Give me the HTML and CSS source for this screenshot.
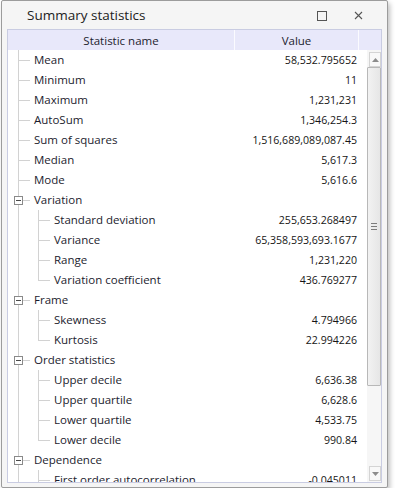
FILE: index.html
```html
<!DOCTYPE html>
<html lang="en">
<head>
  <meta charset="UTF-8">
  <meta name="viewport" content="width=device-width, initial-scale=1.0">
  <title>Summary statistics</title>
  <link rel="stylesheet" href="styles.css">
</head>
<body>
  <div class="window">
    <div class="titlebar">
      <span class="title">Summary statistics</span>
      <span class="btn-max"></span>
      <svg class="btn-close" width="9" height="9" viewBox="0 0 9 9">
        <path d="M1 1 L8 8 M8 1 L1 8" stroke="#555" stroke-width="1.1" fill="none"/>
      </svg>
    </div>

    <div class="grid">
      <div class="grid-head">
        <div class="head-name">Statistic name</div>
        <div class="head-value">Value</div>
        <div class="head-rest"></div>
      </div>

      <div class="grid-body">
        <div class="rows">
          <div class="row"><div class="name"><span class="tl tl-t"></span>Mean</div><div class="value">58,532.795652</div></div>
          <div class="row"><div class="name"><span class="tl tl-t"></span>Minimum</div><div class="value">11</div></div>
          <div class="row"><div class="name"><span class="tl tl-t"></span>Maximum</div><div class="value">1,231,231</div></div>
          <div class="row"><div class="name"><span class="tl tl-t"></span>AutoSum</div><div class="value">1,346,254.3</div></div>
          <div class="row"><div class="name"><span class="tl tl-t"></span>Sum of squares</div><div class="value">1,516,689,089,087.45</div></div>
          <div class="row"><div class="name"><span class="tl tl-t"></span>Median</div><div class="value">5,617.3</div></div>
          <div class="row"><div class="name"><span class="tl tl-t"></span>Mode</div><div class="value">5,616.6</div></div>

          <div class="row"><div class="name"><span class="tl tl-g"><span class="toggle"></span></span>Variation</div><div class="value"></div></div>
          <div class="row"><div class="name"><span class="tl tl-i"></span><span class="tl tl-t"></span>Standard deviation</div><div class="value">255,653.268497</div></div>
          <div class="row"><div class="name"><span class="tl tl-i"></span><span class="tl tl-t"></span>Variance</div><div class="value">65,358,593,693.1677</div></div>
          <div class="row"><div class="name"><span class="tl tl-i"></span><span class="tl tl-t"></span>Range</div><div class="value">1,231,220</div></div>
          <div class="row"><div class="name"><span class="tl tl-i"></span><span class="tl tl-l"></span>Variation coefficient</div><div class="value">436.769277</div></div>

          <div class="row"><div class="name"><span class="tl tl-g"><span class="toggle"></span></span>Frame</div><div class="value"></div></div>
          <div class="row"><div class="name"><span class="tl tl-i"></span><span class="tl tl-t"></span>Skewness</div><div class="value">4.794966</div></div>
          <div class="row"><div class="name"><span class="tl tl-i"></span><span class="tl tl-l"></span>Kurtosis</div><div class="value">22.994226</div></div>

          <div class="row"><div class="name"><span class="tl tl-g"><span class="toggle"></span></span>Order statistics</div><div class="value"></div></div>
          <div class="row"><div class="name"><span class="tl tl-i"></span><span class="tl tl-t"></span>Upper decile</div><div class="value">6,636.38</div></div>
          <div class="row"><div class="name"><span class="tl tl-i"></span><span class="tl tl-t"></span>Upper quartile</div><div class="value">6,628.6</div></div>
          <div class="row"><div class="name"><span class="tl tl-i"></span><span class="tl tl-t"></span>Lower quartile</div><div class="value">4,533.75</div></div>
          <div class="row"><div class="name"><span class="tl tl-i"></span><span class="tl tl-l"></span>Lower decile</div><div class="value">990.84</div></div>

          <div class="row"><div class="name"><span class="tl tl-g"><span class="toggle"></span></span>Dependence</div><div class="value"></div></div>
          <div class="row"><div class="name"><span class="tl tl-i"></span><span class="tl tl-t"></span>First order autocorrelation</div><div class="value">-0.045011</div></div>
        </div>

        <div class="scrollbar">
          <div class="sb-btn">
            <svg width="7" height="4" viewBox="0 0 7 4"><path d="M0 4 L3.5 0 L7 4 Z" fill="#8c8c8c"/></svg>
          </div>
          <div class="sb-thumb">
            <span class="grip"></span>
          </div>
          <div class="sb-track"></div>
          <div class="sb-btn">
            <svg width="7" height="4" viewBox="0 0 7 4"><path d="M0 0 L7 0 L3.5 4 Z" fill="#8c8c8c"/></svg>
          </div>
        </div>
      </div>
    </div>
  </div>
</body>
</html>
```

FILE: styles.css
```css
* {
  margin: 0;
  padding: 0;
  box-sizing: border-box;
}

body {
  font-family: "Open Sans", "Noto Sans", sans-serif;
  background-color: #ffffff;
  color: #1c1c2e;
}

.window {
  width: 387px;
  height: 488px;
  margin-left: 1px;
  background-color: #f5f5f5;
  border: 1px solid #9c9c9c;
  border-radius: 2px;
  box-shadow: 2px 3px 5px rgba(0, 0, 0, 0.25);
  padding: 0 5px 4px 5px;
  display: flex;
  flex-direction: column;
}

.titlebar {
  height: 28px;
  display: flex;
  align-items: center;
  padding-left: 20px;
}

.title {
  font-size: 13.5px;
  color: #222;
  flex: 1;
}

.btn-max {
  width: 10px;
  height: 10px;
  border: 1px solid #555;
  margin-right: 27px;
  margin-top: 1px;
}

.btn-close {
  margin-right: 19px;
  margin-top: 1px;
}

.grid {
  flex: 1;
  border: 1px solid #c9cce2;
  background-color: #fff;
  display: flex;
  flex-direction: column;
  overflow: hidden;
}

.grid-head {
  height: 20px;
  display: flex;
  background-color: #e8e8fa;
  font-size: 11.5px;
  color: #1c1c2e;
}

.grid-head div {
  display: flex;
  align-items: center;
  justify-content: center;
}

.head-name {
  width: 227px;
  border-right: 1px solid #fbfbff;
}

.head-value {
  width: 124px;
  border-right: 1px solid #fbfbff;
}

.head-rest {
  flex: 1;
}

.grid-body {
  flex: 1;
  display: flex;
  overflow: hidden;
}

.rows {
  flex: 1;
  overflow: hidden;
}

.row {
  height: 20px;
  display: flex;
  align-items: center;
  font-size: 11.5px;
}

.name {
  width: 227px;
  height: 20px;
  display: flex;
  align-items: center;
  white-space: nowrap;
  padding-bottom: 1px;
}

.value {
  flex: 1;
  text-align: right;
  padding-right: 10px;
  padding-bottom: 1px;
  white-space: nowrap;
  font-size: 10.6px;
  color: #151515;
}

/* tree lines */
.tl {
  flex: none;
  height: 20px;
  width: 20px;
  margin-bottom: -1px;
}

.tl-i {
  background: linear-gradient(#d2d2d2, #d2d2d2) 10px 0 / 1px 100% no-repeat;
}

.tl-t {
  width: 26px;
  background:
    linear-gradient(#d2d2d2, #d2d2d2) 10px 0 / 1px 100% no-repeat,
    linear-gradient(#d2d2d2, #d2d2d2) 10px 10px / 12px 1px no-repeat;
}

.tl-l {
  width: 26px;
  background:
    linear-gradient(#d2d2d2, #d2d2d2) 10px 0 / 1px 11px no-repeat,
    linear-gradient(#d2d2d2, #d2d2d2) 10px 10px / 12px 1px no-repeat;
}

.tl-g {
  width: 26px;
  background:
    linear-gradient(#d2d2d2, #d2d2d2) 10px 0 / 1px 100% no-repeat,
    linear-gradient(#d2d2d2, #d2d2d2) 15px 10px / 7px 1px no-repeat;
}

.toggle {
  display: block;
  width: 9px;
  height: 9px;
  margin: 6px 0 0 6px;
  border: 1px solid #8a8a8a;
  background: linear-gradient(#4a4a4a, #4a4a4a) center / 5px 1px no-repeat, #fff;
}

/* scrollbar */
.scrollbar {
  width: 14px;
  display: flex;
  flex-direction: column;
  background-color: #f6f6f6;
}

.sb-btn {
  height: 15px;
  margin: 2px 0 0 2px;
  border: 1px solid #d4d4d4;
  background-color: #f8f8f8;
  display: flex;
  align-items: center;
  justify-content: center;
}

.sb-btn:last-child {
  margin: 0 0 1px 2px;
}

.sb-thumb {
  height: 319px;
  border: 1px solid #b8b8b8;
  border-radius: 1px;
  background: linear-gradient(to right, #f2f2f2, #e6e6e6);
  display: flex;
  align-items: center;
  justify-content: center;
}

.grip {
  width: 6px;
  height: 7px;
  background:
    linear-gradient(#7c7c7c, #7c7c7c) 0 0 / 6px 1px no-repeat,
    linear-gradient(#7c7c7c, #7c7c7c) 0 3px / 6px 1px no-repeat,
    linear-gradient(#7c7c7c, #7c7c7c) 0 6px / 6px 1px no-repeat;
}

.sb-track {
  flex: 1;
}
```
